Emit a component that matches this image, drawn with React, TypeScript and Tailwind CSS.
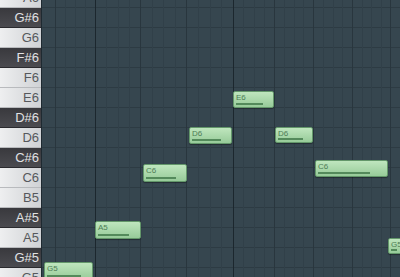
import React from 'react';

type Key = { name: string; black: boolean };

const keys: Key[] = [
  { name: 'A6', black: false },
  { name: 'G#6', black: true },
  { name: 'G6', black: false },
  { name: 'F#6', black: true },
  { name: 'F6', black: false },
  { name: 'E6', black: false },
  { name: 'D#6', black: true },
  { name: 'D6', black: false },
  { name: 'C#6', black: true },
  { name: 'C6', black: false },
  { name: 'B5', black: false },
  { name: 'A#5', black: true },
  { name: 'A5', black: false },
  { name: 'G#5', black: true },
  { name: 'G5', black: false },
];

// page x of beat lines, bar lines are darker
const beatLines = [55, 95, 140, 186, 233, 274, 313, 352, 390];
const barLines = [95, 233];

const notes = [
  { label: 'G5', x: 44, y: 262, w: 49, h: 18 },
  { label: 'A5', x: 95, y: 221, w: 46, h: 18 },
  { label: 'C6', x: 143, y: 164, w: 44, h: 18 },
  { label: 'D6', x: 189, y: 127, w: 43, h: 17 },
  { label: 'E6', x: 233, y: 91, w: 41, h: 17 },
  { label: 'D6', x: 275, y: 127, w: 38, h: 16 },
  { label: 'C6', x: 315, y: 160, w: 73, h: 17 },
  { label: 'G5', x: 388, y: 238, w: 14, h: 16 },
];

const GRID_LEFT = 42;

function PianoKey({ k }: { k: Key }) {
  return (
    <div
      className={
        k.black
          ? 'flex h-5 shrink-0 items-center justify-end border-b border-[#2a2a2e] bg-gradient-to-b from-[#39393d] to-[#4b4b50] pr-[2px] text-[13px] text-[#e2e2e4]'
          : 'flex h-5 shrink-0 items-center justify-end border-b border-[#b8babd] bg-gradient-to-r from-[#eeeff0] to-[#d0d2d5] pr-[2px] text-[13px] text-[#56585c]'
      }
    >
      {k.name}
    </div>
  );
}

function Note({ n }: { n: (typeof notes)[number] }) {
  return (
    <div
      className="absolute flex flex-col justify-between rounded-[2px] border border-[#63976a] bg-gradient-to-b from-[#bfe6be] to-[#97cb99] px-[2px] pt-[1px] pb-[2px] shadow-[0_1px_1px_rgba(0,0,0,0.35)]"
      style={{ left: n.x - GRID_LEFT, top: n.y, width: n.w, height: n.h }}
    >
      <span className="text-[8px] leading-[9px] text-[#4d7c55]">{n.label}</span>
      <div className="h-[2px] w-[78%] bg-[#548a5b]" />
    </div>
  );
}

export default function App() {
  const stepLines: number[] = [];
  for (let i = 0; i < beatLines.length - 1; i++) {
    const a = beatLines[i];
    const b = beatLines[i + 1];
    for (let s = 1; s < 4; s++) stepLines.push(a + ((b - a) * s) / 4);
  }

  return (
    <div className="flex h-[277px] w-[400px] overflow-hidden bg-[#36464f] font-['Liberation_Sans',Arial,sans-serif]">
      <div className="flex w-[42px] shrink-0 flex-col border-r border-[#1f2a31]">
        <div className="-mt-3 flex flex-col">
          {keys.map((k) => (
            <PianoKey key={k.name} k={k} />
          ))}
        </div>
      </div>

      <div className="relative flex-1">
        <div className="-mt-3 flex flex-col">
          {keys.map((k) => (
            <div key={k.name} className="h-5 shrink-0 border-b border-[#2d3b43]" />
          ))}
        </div>
        {stepLines.map((x) => (
          <div
            key={`s${x}`}
            className="absolute top-0 h-full w-px bg-[#314049]"
            style={{ left: Math.round(x) - GRID_LEFT }}
          />
        ))}
        {beatLines.map((x) => (
          <div
            key={`b${x}`}
            className={
              barLines.includes(x)
                ? 'absolute top-0 h-full w-px bg-[#1c272e]'
                : 'absolute top-0 h-full w-px bg-[#29363e]'
            }
            style={{ left: x - GRID_LEFT }}
          />
        ))}
        {notes.map((n, i) => (
          <Note key={i} n={n} />
        ))}
      </div>
    </div>
  );
}
